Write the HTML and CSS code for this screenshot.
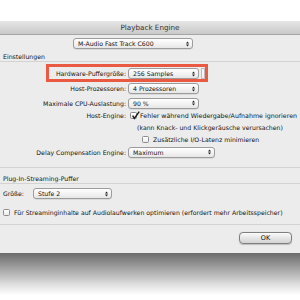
FILE: index.html
```html
<!DOCTYPE html>
<html lang="de">
<head>
  <meta charset="UTF-8">
  <title>Playback Engine</title>
  <link rel="stylesheet" href="styles.css">
</head>
<body>
  <div class="window">
    <div class="titlebar">Playback Engine</div>

    <div class="device">
      <span class="popup popup-device">M-Audio Fast Track C600
        <svg class="arrows" width="3" height="6" viewBox="0 0 3 6"><path d="M0 2.4L1.5 0.6L3 2.4Z M0 3.6L1.5 5.4L3 3.6Z"/></svg>
      </span>
    </div>

    <div class="group-title">Einstellungen</div>
    <div class="settings">
      <div class="row row-1">
        <span class="label">Hardware-Puffergröße:</span>
        <span class="popup popup-std">256 Samples
          <svg class="arrows" width="3" height="6" viewBox="0 0 3 6"><path d="M0 2.4L1.5 0.6L3 2.4Z M0 3.6L1.5 5.4L3 3.6Z"/></svg>
        </span>
        <span class="stub"></span>
        <span class="highlight"></span>
      </div>
      <div class="row row-2">
        <span class="label">Host-Prozessoren:</span>
        <span class="popup popup-std">4 Prozessoren
          <svg class="arrows" width="3" height="6" viewBox="0 0 3 6"><path d="M0 2.4L1.5 0.6L3 2.4Z M0 3.6L1.5 5.4L3 3.6Z"/></svg>
        </span>
      </div>
      <div class="row row-3">
        <span class="label">Maximale CPU-Auslastung:</span>
        <span class="popup popup-std">90 %
          <svg class="arrows" width="3" height="6" viewBox="0 0 3 6"><path d="M0 2.4L1.5 0.6L3 2.4Z M0 3.6L1.5 5.4L3 3.6Z"/></svg>
        </span>
      </div>
      <div class="row row-4">
        <span class="label">Host-Engine:</span>
        <span class="check checked">
          <svg class="tick" width="9" height="9" viewBox="0 0 9 9"><path d="M1.6 4.6L3.4 7.4L8.2 0.6" fill="none" stroke="#1a1a1a" stroke-width="1.4"/></svg>
        </span>
        <span class="check-text wide">Fehler während Wiedergabe/Aufnahme ignorieren</span>
      </div>
      <div class="row row-5">
        <span class="label"></span>
        <span class="note">(kann Knack- und Klickgeräusche verursachen)</span>
      </div>
      <div class="row row-6">
        <span class="label"></span>
        <span class="check indent"></span>
        <span class="check-text">Zusätzliche I/O-Latenz minimieren</span>
      </div>
      <div class="row row-7">
        <span class="label">Delay Compensation Engine:</span>
        <span class="popup popup-wide">Maximum
          <svg class="arrows" width="3" height="6" viewBox="0 0 3 6"><path d="M0 2.4L1.5 0.6L3 2.4Z M0 3.6L1.5 5.4L3 3.6Z"/></svg>
        </span>
      </div>
    </div>

    <div class="group-title group-2">Plug-In-Streaming-Puffer</div>
    <div class="streaming">
      <div class="size-row">
        <span class="size-label">Größe:</span>
        <span class="popup popup-size">Stufe 2
          <svg class="arrows" width="3" height="6" viewBox="0 0 3 6"><path d="M0 2.4L1.5 0.6L3 2.4Z M0 3.6L1.5 5.4L3 3.6Z"/></svg>
        </span>
      </div>
      <div class="opt-row">
        <span class="check"></span>
        <span class="check-text">Für Streaminginhalte auf Audiolaufwerken optimieren (erfordert mehr Arbeitsspeicher)</span>
      </div>
    </div>

    <div class="footer">
      <span class="button">OK</span>
    </div>
  </div>
  <div class="shadow"></div>
</body>
</html>
```

FILE: styles.css
```css
body { margin: 0; background: #fff; font-family: "DejaVu Sans", sans-serif; font-size: 6.2px; color: #141414; }
.window { margin-top: 21px; height: 232px; background: #ececec; display: flex; flex-direction: column; }
.titlebar { height: 13px; line-height: 13px; text-align: center; font-size: 7.2px; color: #333; background: linear-gradient(#e6e6e6, #c9c9c9); border-bottom: 1px solid #a6a6a6; }

.popup { display: flex; align-items: center; justify-content: space-between; box-sizing: border-box; height: 11px; padding: 0 3px 0 4px; background: linear-gradient(#ffffff, #f1f1f1 60%, #e6e6e6); border: 1px solid #9c9c9c; border-radius: 3px; box-shadow: 0 0.5px 0.5px rgba(0,0,0,0.15); white-space: nowrap; }
.arrows { fill: #222; flex: none; }
.popup-device { width: 120px; }
.popup-std { width: 71px; }
.popup-wide { width: 87px; }
.popup-size { width: 79px; }

.device { padding: 3px 0 0 73px; }

.group-title { margin-top: 4px; height: 8px; line-height: 8px; padding-left: 3px; border-bottom: 1px solid #d3d3d3; }
.group-2 { margin-top: 0; padding-top: 7px; }

.settings { padding: 4px 0 8px; border-bottom: 1px solid #d3d3d3; }
.row { position: relative; display: flex; align-items: center; white-space: nowrap; }
.row-1, .row-2 { height: 15px; }
.row-3 { height: 14px; }
.row-4 { height: 11px; }
.row-5, .row-6 { height: 12px; }
.row-7 { height: 14px; }
.label { flex: none; width: 128px; box-sizing: border-box; padding-right: 2px; text-align: right; }

.highlight { position: absolute; left: 46px; top: -2px; width: 162px; height: 18px; box-sizing: border-box; border: 3px solid #ea5a42; }
.stub { width: 4px; height: 11px; margin-left: 2px; box-sizing: border-box; border: 1px solid #bdbdbd; background: #f4f4f4; }

.check { position: relative; flex: none; width: 7px; height: 7px; box-sizing: border-box; border: 1px solid #8c8c8c; border-radius: 1.5px; background: linear-gradient(#ffffff, #ececec); }
.checked { margin-left: 2px; }
.tick { position: absolute; left: -0.5px; top: -2.5px; }
.check-text { margin-left: 4px; }
.wide { margin-left: 3px; font-size: 6.3px; }
.note { margin-left: 9px; }
.indent { margin-left: 14px; }

.streaming { padding-bottom: 8px; border-bottom: 1px solid #d3d3d3; }
.size-row { display: flex; align-items: center; margin-top: 4px; padding-left: 3px; height: 11px; }
.size-label { width: 30px; }
.opt-row { display: flex; align-items: center; margin-top: 9px; padding-left: 3px; height: 8px; white-space: nowrap; }

.footer { padding: 7px 0 0 239px; }
.button { display: flex; align-items: center; justify-content: center; width: 53px; height: 12px; box-sizing: border-box; border: 1px solid #7f7f7f; border-radius: 4px; background: linear-gradient(#fbfbfb, #e4e4e4 55%, #d3d3d3); box-shadow: 0 0.5px 1px rgba(0,0,0,0.2); font-size: 6.5px; color: #111; }

.shadow { height: 47px; background: linear-gradient(#6a6a6a, #a6a6a6 35%, #e4e4e4 70%, #ffffff 90%); }
```
